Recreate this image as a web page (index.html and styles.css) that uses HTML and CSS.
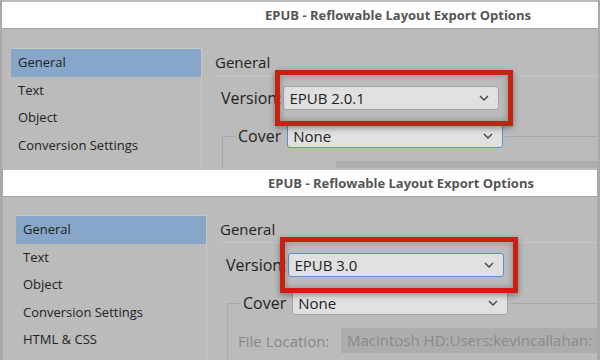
FILE: index.html
```html
<!DOCTYPE html>
<html lang="en">
<head>
  <meta charset="UTF-8">
  <title>EPUB - Reflowable Layout Export Options</title>
  <link rel="stylesheet" href="styles.css">
</head>
<body>
  <div class="dialog dialog--top">
    <div class="dialog__title">EPUB - Reflowable Layout Export Options</div>
    <div class="dialog__body">
      <ul class="nav">
        <li class="nav__item nav__item--active">General</li>
        <li class="nav__item">Text</li>
        <li class="nav__item">Object</li>
        <li class="nav__item">Conversion Settings</li>
        <li class="nav__item">HTML &amp; CSS</li>
      </ul>
      <div class="pane">
        <h2 class="pane__heading">General</h2>
        <div class="row">
          <span class="row__label">Version:</span>
          <div class="select-wrap">
            <div class="select">
              <span>EPUB 2.0.1</span>
              <svg class="chevron" width="10" height="6" viewBox="0 0 10 6"><polyline points="1,1 5,5 9,1" fill="none" stroke="#444" stroke-width="1.4"/></svg>
            </div>
            <div class="callout"></div>
          </div>
        </div>
        <fieldset class="group">
          <legend class="group__legend">
            <span class="row__label row__label--cover">Cover</span>
            <div class="select select--focus">
              <span>None</span>
              <svg class="chevron" width="10" height="6" viewBox="0 0 10 6"><polyline points="1,1 5,5 9,1" fill="none" stroke="#444" stroke-width="1.4"/></svg>
            </div>
          </legend>
          <div class="file-row">
            <span class="file-row__label">File Location:</span>
            <div class="file-row__field">Macintosh HD:Users:kevincallahan:</div>
          </div>
        </fieldset>
      </div>
    </div>
  </div>

  <div class="dialog dialog--bottom">
    <div class="dialog__title">EPUB - Reflowable Layout Export Options</div>
    <div class="dialog__body">
      <ul class="nav">
        <li class="nav__item nav__item--active">General</li>
        <li class="nav__item">Text</li>
        <li class="nav__item">Object</li>
        <li class="nav__item">Conversion Settings</li>
        <li class="nav__item">HTML &amp; CSS</li>
      </ul>
      <div class="pane">
        <h2 class="pane__heading">General</h2>
        <div class="row">
          <span class="row__label">Version:</span>
          <div class="select-wrap">
            <div class="select select--focus">
              <span>EPUB 3.0</span>
              <svg class="chevron" width="10" height="6" viewBox="0 0 10 6"><polyline points="1,1 5,5 9,1" fill="none" stroke="#444" stroke-width="1.4"/></svg>
            </div>
            <div class="callout"></div>
          </div>
        </div>
        <fieldset class="group">
          <legend class="group__legend">
            <span class="row__label row__label--cover">Cover</span>
            <div class="select">
              <span>None</span>
              <svg class="chevron" width="10" height="6" viewBox="0 0 10 6"><polyline points="1,1 5,5 9,1" fill="none" stroke="#444" stroke-width="1.4"/></svg>
            </div>
          </legend>
          <div class="file-row">
            <span class="file-row__label">File Location:</span>
            <div class="file-row__field">Macintosh HD:Users:kevincallahan:</div>
          </div>
        </fieldset>
      </div>
    </div>
  </div>
</body>
</html>
```

FILE: styles.css
```css
* {
  box-sizing: border-box;
}
body {
  margin: 0;
  width: 600px;
  height: 360px;
  overflow: hidden;
  background: #a9a9a9;
  font-family: "Open Sans", "Liberation Sans", sans-serif;
  color: #222;
}

.dialog {
  margin: 0 2px;
  padding-top: 2px;
  background: #bbbbbb;
  overflow: hidden;
}
.dialog--top {
  height: 168px;
}
.dialog--bottom {
  height: 192px;
  margin-left: 3px;
  margin-right: 3px;
}

.dialog__title {
  height: 27px;
  line-height: 27px;
  background: #fff;
  border-bottom: 1px solid #a4a4a4;
  padding-left: 263px;
  font-size: 13px;
  font-weight: 700;
  color: #555;
  white-space: nowrap;
}
.dialog--bottom .dialog__title {
  padding-left: 265px;
}

.dialog__body {
  display: flex;
  padding: 19px 0 0 9px;
}
.dialog--bottom .dialog__body {
  padding-top: 18px;
  padding-left: 13px;
}

/* left list */
.nav {
  list-style: none;
  margin: 0;
  padding: 0;
  width: 191px;
  flex: none;
  border-right: 1px solid #c6c6c6;
  border-top: 1px solid #c6c6c6;
}
.nav__item {
  height: 27.5px;
  line-height: 27.5px;
  padding-left: 7px;
  font-size: 13px;
  white-space: nowrap;
}
.nav__item--active {
  background: #87a6ca;
}

/* right pane */
.pane {
  flex: 1;
  margin-left: 13px;
  margin-right: -12px;
}
.pane__heading {
  margin: 0;
  height: 28px;
  line-height: 28px;
  font-size: 15px;
  font-weight: 400;
  border-bottom: 1px solid #c5c5c5;
}

.row {
  display: flex;
  align-items: center;
  margin-top: 10px;
  padding-left: 6px;
}
.row__label {
  font-size: 16px;
  margin-right: 2px;
  white-space: nowrap;
}
.row__label--cover {
  margin-right: 6px;
}

.select-wrap {
  position: relative;
}
.select {
  width: 216px;
  height: 24px;
  display: flex;
  align-items: center;
  justify-content: space-between;
  padding: 0 9px 0 5px;
  background: #e0e0e0;
  border: 1px solid #a2a2a2;
  border-radius: 3px;
  font-size: 15px;
}
.select--focus {
  border-color: #5a8ed6;
}
.chevron {
  flex: none;
}

.callout {
  position: absolute;
  left: -8px;
  top: -16px;
  width: 238px;
  height: 56px;
  border: 5px solid #cb2011;
  box-shadow: 0 2px 6px rgba(0, 0, 0, 0.4), inset 0 0 6px rgba(0, 0, 0, 0.3);
}

/* cover group */
.group {
  margin: 14px 0 0 7px;
  padding: 0 0 20px 10px;
  border: 1px solid #a8a8a8;
  border-right: none;
  border-bottom: none;
}
.group__legend {
  display: flex;
  align-items: center;
  padding: 0 2px;
  margin-left: 3px;
}

.file-row {
  display: flex;
  align-items: center;
  margin-top: 13px;
}
.file-row__label {
  font-size: 15px;
  color: #888;
  width: 103px;
  flex: none;
  white-space: nowrap;
}
.file-row__field {
  flex: 1;
  height: 25px;
  line-height: 25px;
  padding-left: 6px;
  background: #adadad;
  font-size: 15px;
  color: #8a8a8a;
  white-space: nowrap;
  overflow: hidden;
}
```
